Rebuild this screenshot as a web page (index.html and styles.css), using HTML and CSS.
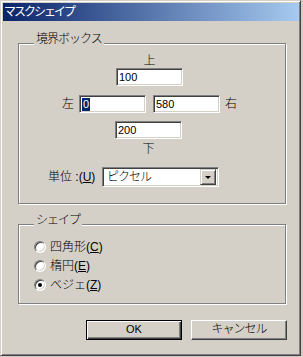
FILE: index.html
```html
<!DOCTYPE html>
<html lang="ja">
<head>
<meta charset="UTF-8"><meta name="viewport" content="width=device-width,initial-scale=1.0">
<title>マスクシェイプ</title>
<link rel="stylesheet" href="styles.css">
</head>
<body>
<div class="win">
  <div class="title">マスクシェイプ</div>
  <div class="content">

    <fieldset class="group bbox">
      <legend>境界ボックス</legend>
      <div class="col top">
        <div class="cap">上</div>
        <div class="field">100</div>
      </div>
      <div class="row">
        <span class="side left">左</span>
        <div class="field"><span class="hl">0</span></div>
        <div class="field gap">580</div>
        <span class="side right">右</span>
      </div>
      <div class="col bottom">
        <div class="field">200</div>
        <div class="cap below">下</div>
      </div>
      <div class="unit">
        <span class="unit-lbl">単位 :(<u>U</u>)</span>
        <div class="select">
          <span class="sel-txt">ピクセル</span>
          <span class="drop"><i></i></span>
        </div>
      </div>
    </fieldset>

    <fieldset class="group shape">
      <legend>シェイプ</legend>
      <div class="opt"><span class="radio"></span>四角形(<u>C</u>)</div>
      <div class="opt"><span class="radio"></span>楕円(<u>E</u>)</div>
      <div class="opt"><span class="radio on"></span>ベジェ(<u>Z</u>)</div>
    </fieldset>

    <div class="buttons">
      <div class="btn default">OK</div>
      <div class="btn">キャンセル</div>
    </div>
  </div>
</div>
</body>
</html>
```

FILE: styles.css
```css
:root{--face:#d4d0c8;--shadow:#808080;--dark:#404040;--hi:#fff}
html{background:var(--face)}
body{margin:0;font:300 12px/14px "Liberation Sans","Noto Sans CJK JP",sans-serif;color:#000}
.win{box-sizing:border-box;width:301px;height:356px;border:1px solid;border-color:var(--face) var(--dark) var(--dark) var(--face);box-shadow:inset 1px 1px var(--hi),inset -1px -1px var(--shadow);padding:2px 1px 1px 2px;background:var(--face)}
.title{height:18px;line-height:19px;padding-left:1px;color:#fff;letter-spacing:-2px;font-weight:400;background:linear-gradient(to right,#0a246a,#a6caf0)}
.content{padding:12px 12px 0 15px}

/* group boxes */
.group{box-sizing:border-box;width:268px;margin:0;padding:0;border:1px solid var(--shadow);box-shadow:inset 1px 1px var(--hi),1px 1px var(--hi);min-width:0}
.group legend{margin-left:15px;padding:0 2px 8px;line-height:13px;letter-spacing:-1px;background:var(--face)}
.bbox{padding-bottom:16px}
.shape{margin-top:10px;padding:2px 0 9px}

/* edit fields */
.field{box-sizing:border-box;width:67px;height:18px;padding:1px 0 0 2px;font-size:11px;font-weight:400;line-height:14px;background:#fff;border:1px solid;border-color:var(--shadow) var(--hi) var(--hi) var(--shadow);box-shadow:inset 1px 1px var(--dark),inset -1px -1px var(--face)}
.hl{display:inline-block;background:#0a246a;color:#fff;padding:0 1px;line-height:13px}
.col{width:67px}
.top{margin-left:97px}
.bottom{margin:8px 0 0 96px}
.cap{text-align:center;height:14px}
.below{margin-top:3px}
.row{display:flex;align-items:center;margin-top:9px}
.side{width:12px}
.left{margin:0 5px 0 43px}
.gap{margin-left:7px}
.right{margin-left:5px}

/* unit select */
.unit{display:flex;align-items:center;margin:11px 0 0 29px}
.unit-lbl{width:54px}
.select{box-sizing:border-box;width:117px;height:20px;display:flex;align-items:center;justify-content:space-between;padding:2px;background:#fff;border:1px solid;border-color:var(--shadow) var(--hi) var(--hi) var(--shadow);box-shadow:inset 1px 1px var(--dark),inset -1px -1px var(--face)}
.sel-txt{padding-left:2px;letter-spacing:-1px}
.drop{box-sizing:border-box;width:16px;height:16px;display:flex;align-items:center;justify-content:center;background:var(--face);border:1px solid;border-color:var(--face) var(--dark) var(--dark) var(--face);box-shadow:inset 1px 1px var(--hi),inset -1px -1px var(--shadow)}
.drop i{width:0;height:0;border-left:3px solid transparent;border-right:3px solid transparent;border-top:3px solid #000}

/* radios */
.opt{display:flex;align-items:center;height:19px}
.radio{box-sizing:border-box;width:12px;height:12px;margin:0 4px 0 15px;display:flex;align-items:center;justify-content:center;border-radius:50%;background:#fff;border:1px solid;border-color:var(--shadow) var(--hi) var(--hi) var(--shadow);box-shadow:inset 1px 1px var(--dark),inset -1px -1px var(--face)}
.radio.on::after{content:"";width:4px;height:4px;border-radius:50%;background:#000}

/* buttons */
.buttons{display:flex;justify-content:flex-end;gap:9px;margin-top:16px}
.btn{box-sizing:border-box;width:96px;height:20px;line-height:17px;text-align:center;letter-spacing:-1px;border:1px solid;border-color:var(--hi) var(--dark) var(--dark) var(--hi);box-shadow:inset -1px -1px var(--shadow)}
.btn.default{font-size:11px;letter-spacing:0;border-color:#000;box-shadow:inset 1px 1px var(--hi),inset -1px -1px var(--dark),inset -2px -2px var(--shadow)}
```
